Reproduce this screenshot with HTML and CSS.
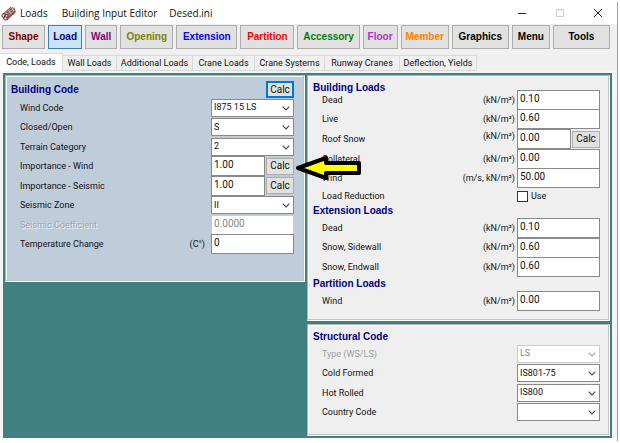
FILE: index.html
```html
<!DOCTYPE html>
<html lang="en">
<head>
<meta charset="utf-8">
<title>Loads - Building Input Editor</title>
<link rel="stylesheet" href="styles.css">
</head>
<body>
<svg class="defs" aria-hidden="true">
  <symbol id="chevron" viewBox="0 0 8 5"><path d="M.7.7 4 4 7.3.7" fill="none" stroke="currentColor" stroke-width="1.1"/></symbol>
</svg>
<div class="window">
  <header class="titlebar">
    <svg class="app-icon" viewBox="0 0 15 15" aria-hidden="true">
      <path d="M1 9 10 1l4 1 .5 4L6 14l-4-1z" fill="#b98d8d"/>
      <path d="M1 9 10 1M3 9l9-7.500M5 10l9-7M6 12l8.500-7M6 14l8.500-8" stroke="#6d2f33" stroke-width=".9"/>
      <path d="m4 6 3 4M7 3.500l3 4M10 1l3 4" stroke="#eadada" stroke-width=".8"/>
      <circle cx="2.500" cy="9.500" r="1.700" fill="#e6d6d6" stroke="#5b2529" stroke-width=".9"/>
      <circle cx="5.500" cy="10" r="1.600" fill="#e6d6d6" stroke="#5b2529" stroke-width=".9"/>
      <circle cx="4.500" cy="12.500" r="1.700" fill="#e6d6d6" stroke="#5b2529" stroke-width=".9"/>
    </svg>
    <span class="title-app">Loads</span>
    <span class="title-tool">Building Input Editor</span>
    <span class="title-file">Desed.ini</span>
    <div class="caption-buttons">
      <button type="button" aria-label="Minimize"><svg viewBox="0 0 10 10"><path d="M1 5.500h8" stroke="#222"/></svg></button>
      <button type="button" aria-label="Maximize" disabled><svg viewBox="0 0 10 10"><path d="M1.500 1.500h7v7h-7z" fill="none" stroke="#ccc"/></svg></button>
      <button type="button" aria-label="Close"><svg viewBox="0 0 10 10"><path d="m1 1 8 8M9 1 1 9" stroke="#222"/></svg></button>
    </div>
  </header>

  <nav class="toolbar" aria-label="Sections">
    <button type="button" class="maroon">Shape</button>
    <button type="button" class="navy current">Load</button>
    <button type="button" class="purple">Wall</button>
    <button type="button" class="olive">Opening</button>
    <button type="button" class="blue">Extension</button>
    <button type="button" class="red">Partition</button>
    <button type="button" class="green">Accessory</button>
    <button type="button" class="orchid">Floor</button>
    <button type="button" class="orange">Member</button>
    <button type="button">Graphics</button>
    <button type="button">Menu</button>
    <button type="button">Tools</button>
  </nav>

  <div class="tabs" role="tablist">
    <button type="button" role="tab" aria-selected="true">Code, Loads</button>
    <button type="button" role="tab">Wall Loads</button>
    <button type="button" role="tab">Additional Loads</button>
    <button type="button" role="tab">Crane Loads</button>
    <button type="button" role="tab">Crane Systems</button>
    <button type="button" role="tab">Runway Cranes</button>
    <button type="button" role="tab">Deflection, Yields</button>
  </div>

  <main class="workspace">
    <section class="panel building-code">
      <div class="panel-head"><h2>Building Code</h2><button type="button" class="calc focused">Calc</button></div>
      <div class="rows eight">
        <div class="row"><label for="wc">Wind Code</label><span class="combo"><select id="wc"><option>I875 15 LS</option></select><svg><use href="#chevron"/></svg></span></div>
        <div class="row"><label for="co">Closed/Open</label><span class="combo"><select id="co"><option>S</option></select><svg><use href="#chevron"/></svg></span></div>
        <div class="row"><label for="tc">Terrain Category</label><span class="combo"><select id="tc"><option>2</option></select><svg><use href="#chevron"/></svg></span></div>
        <div class="row"><label for="iw">Importance - Wind</label><span class="split"><input id="iw" value="1.00"><button type="button" class="calc">Calc</button></span>
          <svg class="arrow" viewBox="0 0 68 26" aria-hidden="true"><path d="M4 13 32 3v5h33v10H32v5z" fill="#ff0" stroke="#000" stroke-width="4" stroke-linejoin="round"/></svg>
        </div>
        <div class="row"><label for="is">Importance - Seismic</label><span class="split"><input id="is" value="1.00"><button type="button" class="calc">Calc</button></span></div>
        <div class="row"><label for="sz">Seismic Zone</label><span class="combo"><select id="sz"><option>II</option></select><svg><use href="#chevron"/></svg></span></div>
        <div class="row off etched"><label for="sc">Seismic Coefficient</label><input id="sc" value="0.0000" disabled></div>
        <div class="row"><label for="tp">Temperature Change</label><span class="unit">(C°)</span><input id="tp" value="0"></div>
      </div>
    </section>

    <div class="column">
      <section class="panel loads">
        <h2 class="tight">Building Loads</h2>
        <div class="rows five">
          <div class="row"><label for="bd">Dead</label><span class="unit">(kN/m²)</span><input id="bd" value="0.10"></div>
          <div class="row"><label for="bl">Live</label><span class="unit">(kN/m²)</span><input id="bl" value="0.60"></div>
          <div class="row"><label for="rs">Roof Snow</label><span class="unit raised">(kN/m²)</span><span class="split"><input id="rs" value="0.00"><button type="button" class="calc">Calc</button></span></div>
          <div class="row"><label for="cl">Collateral</label><span class="unit">(kN/m²)</span><input id="cl" value="0.00"></div>
          <div class="row"><label for="bw">Wind</label><span class="unit">(m/s, kN/m²)</span><input id="bw" value="50.00"></div>
        </div>
        <div class="row check-row"><span class="label">Load Reduction</span><label class="check"><input type="checkbox">Use</label></div>
        <h2>Extension Loads</h2>
        <div class="rows three">
          <div class="row"><label for="ed">Dead</label><span class="unit">(kN/m²)</span><input id="ed" value="0.10"></div>
          <div class="row"><label for="es">Snow, Sidewall</label><span class="unit">(kN/m²)</span><input id="es" value="0.60"></div>
          <div class="row"><label for="ee">Snow, Endwall</label><span class="unit">(kN/m²)</span><input id="ee" value="0.60"></div>
        </div>
        <h2>Partition Loads</h2>
        <div class="rows one">
          <div class="row"><label for="pw">Wind</label><span class="unit">(kN/m²)</span><input id="pw" value="0.00"></div>
        </div>
      </section>

      <section class="panel structural">
        <h2>Structural Code</h2>
        <div class="rows four">
          <div class="row off"><label for="ty">Type (WS/LS)</label><span class="combo"><select id="ty" disabled><option>LS</option></select><svg><use href="#chevron"/></svg></span></div>
          <div class="row"><label for="cf">Cold Formed</label><span class="combo"><select id="cf"><option>IS801-75</option></select><svg><use href="#chevron"/></svg></span></div>
          <div class="row"><label for="hr">Hot Rolled</label><span class="combo"><select id="hr"><option>IS800</option></select><svg><use href="#chevron"/></svg></span></div>
          <div class="row"><label for="cc">Country Code</label><span class="combo"><select id="cc"><option></option></select><svg><use href="#chevron"/></svg></span></div>
        </div>
      </section>
    </div>
  </main>
</div>
</body>
</html>
```
FILE: styles.css
```css
* { box-sizing: border-box; }

body {
  margin: 0;
  background: #fff;
  color: #111;
  font: 9px/12px Roboto, "Liberation Sans", sans-serif;
}

button, input, select { font: inherit; color: inherit; margin: 0; }
.defs { position: absolute; width: 0; height: 0; }

.window {
  margin: 2px 2px 0 0;
  padding-bottom: 3px;
  border-right: 1px solid #6fa8e6;
}

/* Title bar */
.titlebar {
  display: flex;
  align-items: center;
  height: 22px;
  padding: 0 9px 0 1px;
  font: 10px/14px "Open Sans", "Noto Sans", sans-serif;
}
.app-icon { width: 15px; height: 15px; margin-right: 4px; }
.title-app { margin-right: 14px; }
.title-tool { margin-right: 12px; }
.caption-buttons { display: flex; gap: 18px; margin-left: auto; }
.caption-buttons button {
  display: flex;
  align-items: center;
  justify-content: center;
  width: 20px;
  height: 20px;
  padding: 0;
  border: 0;
  background: none;
}
.caption-buttons svg { width: 10px; height: 10px; }

/* Toolbar */
.toolbar {
  display: grid;
  grid-template-columns: 43fr 34fr 32fr 53fr 61fr 54fr 62fr 35fr 48fr 57fr 38fr 57fr;
  gap: 3px;
  padding: 1px 7px 4px 2px;
  background: #f0f0f0;
}
.toolbar button {
  height: 24px;
  padding: 0;
  border: 1px solid #adadad;
  background: #e1e1e1;
  color: #000;
  font: bold 10px/12px "Liberation Sans", sans-serif;
  white-space: nowrap;
}
.toolbar .maroon { color: #800000; }
.toolbar .navy { color: #000080; }
.toolbar .purple { color: #800080; }
.toolbar .olive { color: #808000; }
.toolbar .blue { color: #0000ff; }
.toolbar .red { color: #ff0000; }
.toolbar .green { color: #008000; }
.toolbar .orchid { color: #b030d0; }
.toolbar .orange { color: #ff8000; }
.toolbar .current { border-color: #3c7fb8; background: #cce4f7; }

/* Tabs */
.tabs {
  display: grid;
  grid-template-columns: 63px 54px 76px 62px 70px 75px 77px;
  align-items: end;
  height: 18px;
  background: #f0f0f0;
}
.tabs button {
  height: 16px;
  padding: 0;
  border: 1px solid #d9d9d9;
  border-left: 0;
  background: #f0f0f0;
  white-space: nowrap;
}
.tabs [aria-selected="true"] {
  height: 18px;
  padding-bottom: 2px;
  border-bottom: 0;
  background: #fff;
}

/* Work area */
.workspace {
  display: grid;
  grid-template-columns: 300fr 303fr;
  align-items: start;
  gap: 2px;
  padding: 2px;
  border: solid #f4f4f4;
  border-width: 2px 5px 0 3px;
  background: #408080;
  background-clip: padding-box;
}
.column { display: grid; gap: 3px; }

.panel {
  padding: 5px 9px 9px 5px;
  border: 1px solid;
  border-color: #b4b4b4 #fff #fff #b4b4b4;
  background: #efefef;
  box-shadow: inset -1px -1px #c4c4c4, inset 1px 1px #fafafa;
}
.building-code { background: #bfcddb; padding-right: 10px; padding-bottom: 27px; }
.structural { padding-bottom: 13px; }

h2 {
  margin: 0;
  color: #000080;
  font: bold 10px/14px "Liberation Sans", sans-serif;
}
.tight { margin-bottom: -5px; }
.panel-head { display: flex; justify-content: space-between; align-items: center; height: 17px; }

/* Field rows */
.rows { display: grid; grid-auto-rows: minmax(0, 1fr); }
.eight { height: 156px; }
.five { height: 98px; }
.four { height: 78px; }
.three { height: 59px; }
.one { height: 20px; }

.row {
  position: relative;
  display: grid;
  grid-template-columns: 1fr auto 83px;
  grid-template-rows: minmax(0, 1fr);
  align-items: center;
  column-gap: 2px;
  padding-left: 9px;
}
.row > :last-child { grid-column: 3; }
.row > input, .row > .split, .row > .combo { grid-column: 3; }
.building-code .row { column-gap: 6px; }

.rows input {
  width: 100%;
  min-width: 0;
  height: 20px;
  padding: 0 2px 3px;
  border: 1px solid #8a8a8a;
  border-radius: 0;
  background: #fff;
  font-size: 10px;
}
.raised { padding-bottom: 6px; }

.combo { position: relative; display: block; }
.combo select {
  display: block;
  width: 100%;
  height: 18px;
  padding: 0 16px 1px 2px;
  border: 1px solid #8a8a8a;
  border-radius: 0;
  background: #fff;
  appearance: none;
}
.combo svg {
  position: absolute;
  right: 4px;
  top: 7px;
  width: 8px;
  height: 5px;
  color: #444;
  pointer-events: none;
}

.split {
  display: grid;
  grid-template-columns: 1fr 28px;
  align-items: center;
  column-gap: 1px;
}
.calc {
  width: 28px;
  height: 17px;
  padding: 0;
  border: 1px solid #adadad;
  background: #e1e1e1;
  font-size: 10px;
}
.focused { border: 1px solid #0078d7; outline: 1px solid #0078d7; outline-offset: -2px; }

.off, .off .combo svg { color: #a0a0a0; }
.off select, .off input { border-color: #ccc; color: #858585; opacity: 1; }
.etched label { color: #9ca5ae; text-shadow: 1px 1px #eef2f6; }

.check-row { height: 16px; }
.check { display: flex; align-items: center; gap: 3px; }
.check input {
  width: 11px;
  height: 11px;
  border: 1px solid #333;
  background: #fff;
  appearance: none;
}

.arrow {
  position: absolute;
  z-index: 1;
  left: 100%;
  top: -2px;
  width: 68px;
  height: 26px;
}
```
